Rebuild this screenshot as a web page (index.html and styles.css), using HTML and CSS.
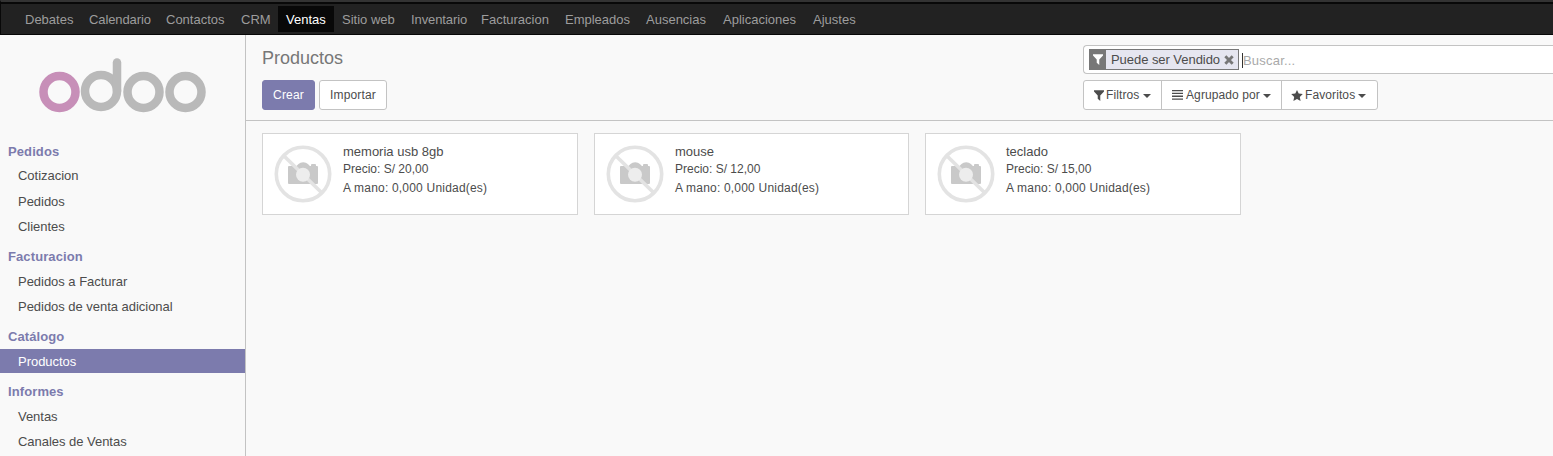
FILE: index.html
```html
<!DOCTYPE html>
<html lang="es">
<head>
<meta charset="utf-8">
<title>Productos - Odoo</title>
<link rel="stylesheet" href="styles.css">
</head>
<body>
<svg class="defs" width="0" height="0">
  <symbol id="filter" viewBox="0 0 11 11"><path d="M0 0.200h11v1.300L6.900 5.400V11L4.100 8.700V5.400L0 1.500z"/></symbol>
  <symbol id="no-image" viewBox="0 0 58 58">
    <path fill="#c9c9c9" d="M14 22q0-1 1-1h7.500l2-2q1.700-1.800 4.700-1.800t4.700 1.800l2 2H37v-1q0-1 1-1h3q1 0 1 1v1h1q1 0 1 1v16q0 1-1 1H15q-1 0-1-1z"/>
    <g fill="none" stroke="#e3e3e3" stroke-width="3.600"><circle cx="29" cy="29" r="26.700"/><path d="M10 11l38 37"/></g>
    <circle cx="29" cy="29.800" r="7" fill="#ededed"/>
  </symbol>
</svg>
<nav class="topbar">
  <a>Debates</a><a class="tight">Calendario</a><a>Contactos</a><a>CRM</a><a class="active">Ventas</a><a>Sitio web</a><a class="tight">Inventario</a><a>Facturacion</a><a>Empleados</a><a>Ausencias</a><a>Aplicaciones</a><a>Ajustes</a>
</nav>
<div class="layout">
  <aside class="sidebar">
    <svg class="logo" width="167" height="56" viewBox="0 0 167 56" fill="none" stroke="#b9b9b9" stroke-width="8.500">
      <circle cx="20.500" cy="34" r="16" stroke="#c78fb8"/>
      <circle cx="62" cy="33" r="16"/>
      <path d="M78 33V4.500" stroke-linecap="round"/>
      <circle cx="104.500" cy="34" r="16"/>
      <circle cx="146.500" cy="34" r="16"/>
    </svg>
    <section class="first"><h2>Pedidos</h2><a>Cotizacion</a><a>Pedidos</a><a>Clientes</a></section>
    <section><h2>Facturacion</h2><a>Pedidos a Facturar</a><a>Pedidos de venta adicional</a></section>
    <section><h2>Catálogo</h2><a class="active">Productos</a></section>
    <section><h2>Informes</h2><a>Ventas</a><a>Canales de Ventas</a></section>
  </aside>
  <main>
    <header class="panel">
      <div class="panel-left">
        <h1>Productos</h1>
        <div class="buttons"><button class="primary">Crear</button><button>Importar</button></div>
      </div>
      <div class="panel-right">
        <div class="search">
          <div class="facet">
            <span class="facet-icon"><svg width="10" height="11" viewBox="0 0 11 11" preserveAspectRatio="none"><use href="#filter"/></svg></span>
            <span class="facet-label">Puede ser Vendido</span>
            <svg class="remove" width="10" height="10" viewBox="0 0 9 9"><path d="M1.200 1.200l6.600 6.600M7.800 1.200L1.200 7.800"/></svg>
          </div>
          <span class="caret-line"></span><span class="placeholder">Buscar...</span>
        </div>
        <div class="options">
          <div class="option filters"><svg width="10" height="11" viewBox="0 0 11 11" preserveAspectRatio="none"><use href="#filter"/></svg><span>Filtros</span><i></i></div>
          <div class="option group"><svg width="11" height="10" viewBox="0 0 11 10"><path d="M0 0h11v1.300H0zM0 2.800h11v1.300H0zM0 5.600h11v1.300H0zM0 8.400h11v1.300H0z"/></svg><span>Agrupado por</span><i></i></div>
          <div class="option favorites"><svg width="12" height="11" viewBox="0 0 12 11"><path d="M6 0l1.700 3.600 4.100.5-3 2.800.8 4.100L6 9 2.400 11l.8-4.100-3-2.800 4.100-.5z"/></svg><span>Favoritos</span><i></i></div>
        </div>
      </div>
    </header>
    <div class="cards">
      <article><svg width="58" height="58"><use href="#no-image"/></svg><div><h3>memoria usb 8gb</h3><p>Precio: S/ 20,00</p><p class="stock">A mano: 0,000 Unidad(es)</p></div></article>
      <article><svg width="58" height="58"><use href="#no-image"/></svg><div><h3>mouse</h3><p>Precio: S/ 12,00</p><p class="stock">A mano: 0,000 Unidad(es)</p></div></article>
      <article><svg width="58" height="58"><use href="#no-image"/></svg><div><h3>teclado</h3><p>Precio: S/ 15,00</p><p class="stock">A mano: 0,000 Unidad(es)</p></div></article>
    </div>
  </main>
</div>
</body>
</html>
```
FILE: styles.css
```css
* { box-sizing: border-box; }
body { margin: 0; height: 456px; overflow: hidden; background: #f9f9f9; color: #4c4c4c; font: 13px/20px "Liberation Sans", Arial, sans-serif; }
h1, h2, h3, p { margin: 0; font-weight: normal; }
.defs { display: block; height: 0; }
.topbar { display: flex; height: 35px; padding: 2px 0 1px 16px; background: #222; border-top: 2px solid #333; border-bottom: 1px solid #080808; border-left: 1px solid #080808; box-shadow: inset 0 2px #080808; }
.topbar a { height: 26px; margin-top: 2px; padding: 0 8px; line-height: 27px; color: #9d9d9d; white-space: nowrap; }
.topbar a.active { width: 56px; background: #080808; color: #fff; }
.topbar .tight { letter-spacing: -0.1px; }
.topbar a:nth-child(1) { width: 64px; }
.topbar a:nth-child(2) { width: 77px; }
.topbar a:nth-child(3) { width: 75px; }
.topbar a:nth-child(4) { width: 45px; }
.topbar a:nth-child(6) { width: 69px; }
.topbar a:nth-child(7) { width: 70px; }
.topbar a:nth-child(8) { width: 84px; }
.topbar a:nth-child(9) { width: 81px; }
.topbar a:nth-child(10) { width: 77px; }
.topbar a:nth-child(11) { width: 90px; }
.layout { display: flex; height: 421px; }
.sidebar { width: 246px; flex: none; border-right: 1px solid #c3c3c3; }
.logo { display: block; margin: 23px 0 27px 39px; }
.sidebar section { padding-top: 8px; }
.sidebar .first { padding-top: 0; }
.sidebar h2 { height: 20px; margin-bottom: 3px; padding-left: 8px; color: #7c7bad; font-size: 13px; font-weight: bold; line-height: 21px; letter-spacing: 0.1px; }
.sidebar .first h2 { margin-bottom: 2px; }
.sidebar a { display: block; height: 24px; padding-left: 18px; line-height: 25px; letter-spacing: -0.03px; }
.sidebar a + a { margin-top: 1px; }
.sidebar .first h2 + a + a { margin-top: 2px; }
.sidebar a.active { background: #7c7bad; color: #fff; }
main { flex: 1; min-width: 0; }
.panel { display: flex; justify-content: space-between; height: 86px; padding-left: 16px; border-bottom: 1px solid #c3c3c3; }
.panel h1 { height: 45px; padding-top: 13px; color: #777; font-size: 18px; line-height: 20px; }
.buttons { display: flex; gap: 4px; }
button { height: 30px; padding: 0 10px; border: 1px solid #c3c3c3; border-radius: 3px; background: #fff; color: #4c4c4c; font: 12px/28px "Liberation Sans", Arial, sans-serif; letter-spacing: 0.15px; }
.buttons button { width: 68px; }
.buttons .primary { width: 53px; border-color: #7c7bad; background: #7c7bad; color: #fff; }
.panel-right { width: 470px; padding-top: 10px; }
.search { display: flex; height: 29px; padding: 3px 5px; border: 1px solid #c3c3c3; border-right: 0; border-radius: 4px 0 0 4px; background: #fff; }
.facet { display: flex; align-items: center; width: 150px; height: 21px; border: 1px solid #777; background: #e6e6f0; }
.facet-icon { display: grid; place-items: center; width: 16px; height: 19px; background: #777; }
.facet svg { fill: #fff; }
.facet-label { margin-left: 5px; letter-spacing: -0.05px; white-space: nowrap; }
.facet .remove { margin-left: 4px; fill: none; stroke: #777; stroke-width: 2.600; }
.caret-line { width: 1px; height: 15px; margin: 4px 0 0 3px; background: #333; }
.placeholder { line-height: 23px; letter-spacing: 0.2px; color: #a9a9a9; }
.options { display: flex; width: 295px; height: 30px; margin-top: 6px; border: 1px solid #c3c3c3; border-radius: 3px; background: #fff; font-size: 12px; }
.option { display: flex; align-items: center; padding-left: 10px; letter-spacing: 0.1px; white-space: nowrap; }
.option + .option { border-left: 1px solid #c3c3c3; }
.option svg { flex: none; margin-right: 3px; fill: #4c4c4c; }
.option i { margin: 2px 0 0 3px; border: 4px solid transparent; border-top-color: #4c4c4c; border-bottom: 0; }
.filters { width: 77px; }
.filters svg { margin-right: 2px; }
.filters i { margin-left: 4px; }
.group { width: 120px; }
.favorites svg { margin-right: 2px; }
.favorites { padding-left: 9px; }
.cards { display: grid; grid-template-columns: 316px 315px 316px; gap: 16px; padding: 12px 16px; }
article { display: flex; gap: 10px; height: 82px; padding: 11px 11px; border: 1px solid #d5d5d5; background: #fff; }
article > svg { flex: none; margin-right: 1px; }
article h3 { height: 14px; font-size: 13px; line-height: 13px; }
article p { height: 19px; font-size: 12px; line-height: 20px; }
article .stock { letter-spacing: 0.2px; }
```
